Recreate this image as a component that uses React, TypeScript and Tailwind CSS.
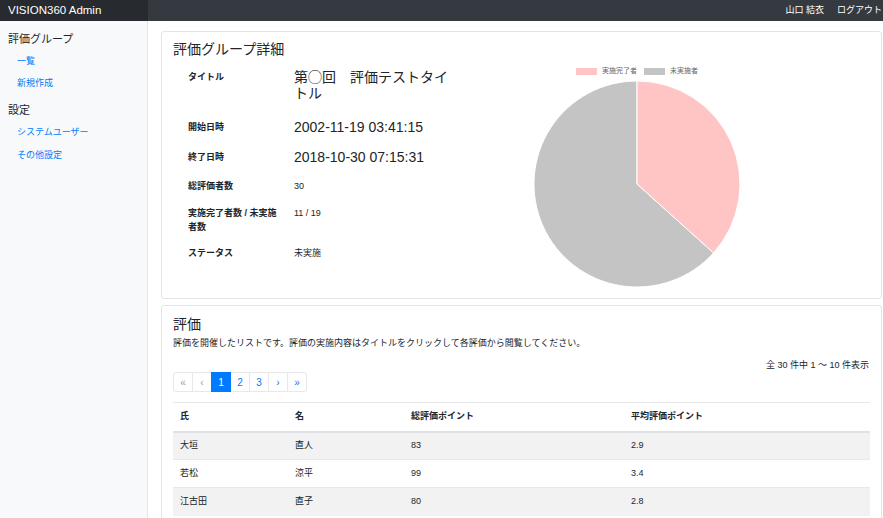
import React from 'react';

// ============================================================================
// データ
// ============================================================================

const DETAILS: Array<{ label: string; value: string; big?: boolean; h: string }> = [
  { label: 'タイトル', value: '第◯回　評価テストタイトル', big: true, h: 'h-[50px]' },
  { label: '開始日時', value: '2002-11-19 03:41:15', big: true, h: 'h-[30px]' },
  { label: '終了日時', value: '2018-10-30 07:15:31', big: true, h: 'h-[30px]' },
  { label: '総評価者数', value: '30', h: 'h-[27px]' },
  { label: '実施完了者数 / 未実施者数', value: '11 / 19', h: 'h-[40px]' },
  { label: 'ステータス', value: '未実施', h: 'h-[20px]' },
];

const ROWS = [
  { last: '大垣', first: '直人', total: '83', avg: '2.9' },
  { last: '若松', first: '涼平', total: '99', avg: '3.4' },
  { last: '江古田', first: '直子', total: '80', avg: '2.8' },
];

const PAGES = [
  { label: '«', disabled: true },
  { label: '‹', disabled: true },
  { label: '1', active: true },
  { label: '2' },
  { label: '3' },
  { label: '›' },
  { label: '»' },
];

const FONT = "font-['Helvetica_Neue','Liberation_Sans','Noto_Sans_CJK_JP',sans-serif]";

// ============================================================================
// サブコンポーネント
// ============================================================================

function NavBar() {
  return (
    <header className="flex h-[21px] shrink-0 bg-[#343a40] text-white">
      <div className="flex w-[148px] items-center bg-[#272b30] pl-[8px] text-[11.5px]">VISION360 Admin</div>
      <div className="flex flex-1 items-center justify-end gap-[13px] pr-[1px] text-[9px]">
        <span>山口 結衣</span>
        <span>ログアウト</span>
      </div>
    </header>
  );
}

function SideBar() {
  return (
    <aside className="w-[148px] shrink-0 border-r border-[#e3e5e8] bg-[#f8f9fa] pl-[8px] pt-[10px]">
      <div className="text-[11px] leading-[16px] text-[#212529]">評価グループ</div>
      <ul className="mt-[8px] flex flex-col gap-[10px] pl-[9px] text-[9px] leading-[12px] text-[#007bff]">
        <li>一覧</li>
        <li>新規作成</li>
      </ul>
      <div className="mt-[13px] text-[11px] leading-[16px] text-[#212529]">設定</div>
      <ul className="mt-[8px] flex flex-col gap-[11px] pl-[9px] text-[9px] leading-[12px] text-[#007bff]">
        <li>システムユーザー</li>
        <li>その他設定</li>
      </ul>
    </aside>
  );
}

function PieChart() {
  return (
    <div className="mt-[27px] flex w-[234px] flex-col items-center">
      <div className="flex items-center gap-[5px] text-[7px] leading-[8px] text-[#666]">
        <span className="h-[7px] w-[21px] bg-[#ffc4c4]" />
        <span>実施完了者</span>
        <span className="ml-[2px] h-[7px] w-[21px] bg-[#c4c4c4]" />
        <span>未実施者</span>
      </div>
      <svg width="208" height="208" viewBox="-1 -1 208 208" className="mt-[5px]">
        <path d="M103 103 L179.54 171.92 A103 103 0 1 1 103 0 Z" fill="#c4c4c4" stroke="#fff" strokeWidth="1" />
        <path d="M103 103 L103 0 A103 103 0 0 1 179.54 171.92 Z" fill="#ffc4c4" stroke="#fff" strokeWidth="1" />
      </svg>
    </div>
  );
}

function DetailCard() {
  return (
    <section className="flex h-[268px] rounded-[3px] border border-[#e4e4e4] bg-white px-[11px] pt-[8px]">
      <div className="w-[347px] shrink-0">
        <h2 className="text-[14px] leading-[18px] text-[#212529]">評価グループ詳細</h2>
        <dl className="mt-[11px]">
          {DETAILS.map((d) => (
            <div key={d.label} className={`flex items-start ${d.h}`}>
              <dt
                className={`w-[111px] shrink-0 pl-[15px] text-[9px] font-bold text-[#212529] ${
                  d.big ? 'pt-[1px] leading-[14px]' : 'leading-[14px]'
                }`}
              >
                {d.label}
              </dt>
              <dd
                className={`ml-[10px] w-[160px] text-[#212529] ${
                  d.big ? 'text-[14px] leading-[16px]' : 'text-[9px] leading-[14px]'
                }`}
              >
                {d.value}
              </dd>
            </div>
          ))}
        </dl>
      </div>
      <PieChart />
    </section>
  );
}

function Pagination() {
  return (
    <nav className="flex">
      {PAGES.map((p, i) => (
        <span
          key={i}
          className={`flex h-[20px] w-[20px] items-center justify-center border text-[10px] ${
            i === 0 ? 'rounded-l-[3px]' : '-ml-px'
          } ${i === PAGES.length - 1 ? 'rounded-r-[3px]' : ''} ${
            p.active
              ? 'z-10 border-[#007bff] bg-[#007bff] text-white'
              : p.disabled
                ? 'border-[#e6e8ea] bg-white text-[#9aa0a6]'
                : 'border-[#e6e8ea] bg-white text-[#007bff]'
          }`}
        >
          {p.label}
        </span>
      ))}
    </nav>
  );
}

function EvaluationCard() {
  return (
    <section className="mt-[6px] rounded-[3px] border border-[#e4e4e4] bg-white px-[11px] pt-[9px] pb-[12px]">
      <h2 className="text-[14px] leading-[18px] text-[#212529]">評価</h2>
      <p className="mt-[4px] text-[9px] leading-[13px] text-[#212529]">
        評価を開催したリストです。評価の実施内容はタイトルをクリックして各評価から閲覧してください。
      </p>
      <div className="mt-[9px] text-right text-[9px] leading-[12px] pr-[1px] text-[#212529]">全 30 件中 1 〜 10 件表示</div>
      <div className="mt-[1px]">
        <Pagination />
      </div>
      <table className="mt-[10px] w-full border-collapse text-left text-[9px] text-[#212529]">
        <colgroup>
          <col className="w-[115px]" />
          <col className="w-[116px]" />
          <col className="w-[220px]" />
          <col />
        </colgroup>
        <thead>
          <tr className="h-[29px] border-t border-[#e6e8ea] border-b-2 border-b-[#dee2e6]">
            <th className="px-[7px] font-bold">氏</th>
            <th className="px-[7px] font-bold">名</th>
            <th className="px-[7px] font-bold">総評価ポイント</th>
            <th className="px-[7px] font-bold">平均評価ポイント</th>
          </tr>
        </thead>
        <tbody>
          {ROWS.map((r, i) => (
            <tr key={r.last} className={`h-[28px] border-t border-[#e6e8ea] ${i % 2 === 0 ? 'bg-[#f2f2f2]' : 'bg-white'}`}>
              <td className="px-[7px]">{r.last}</td>
              <td className="px-[7px]">{r.first}</td>
              <td className="px-[7px]">{r.total}</td>
              <td className="px-[7px]">{r.avg}</td>
            </tr>
          ))}
        </tbody>
      </table>
    </section>
  );
}

// ============================================================================
// メインコンポーネント
// ============================================================================

export default function App() {
  return (
    <div className={`flex h-[518px] w-[883px] flex-col overflow-hidden bg-white ${FONT}`}>
      <NavBar />
      <div className="flex flex-1 overflow-hidden">
        <SideBar />
        <main className="flex-1 pl-[13px] pr-[1px] pt-[10px]">
          <DetailCard />
          <EvaluationCard />
        </main>
      </div>
    </div>
  );
}
